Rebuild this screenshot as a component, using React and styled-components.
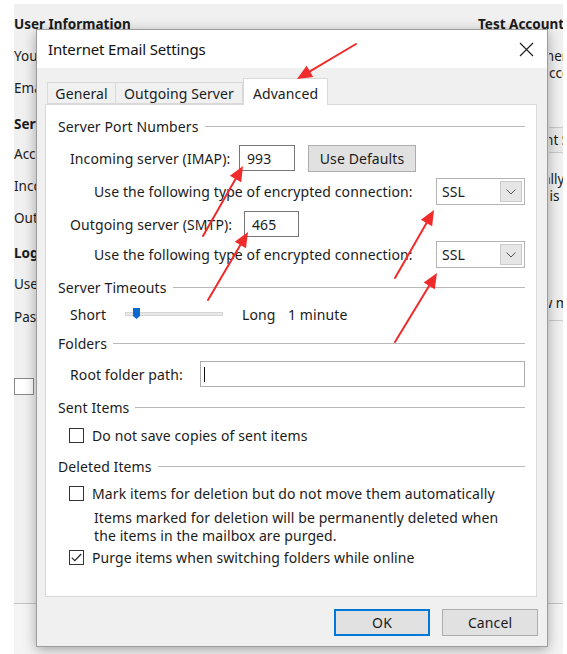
import React from "react";
import styled, { createGlobalStyle } from "styled-components";

const GlobalStyle = createGlobalStyle`
  html, body {
    margin: 0;
    padding: 0;
    background: #fff;
  }
  body {
    font-family: "Noto Sans", "Open Sans", sans-serif;
    color: #1b1b1b;
  }
`;

const Page = styled.div`
  position: relative;
  width: 567px;
  height: 654px;
  overflow: hidden;
  background: #fff;
  padding: 4px 4px 0 14px;
  box-sizing: border-box;
`;

/* account window behind the dialog */
const BackWindow = styled.div`
  height: 100%;
  background: #f0f0f0;
  display: flex;
  flex-direction: column;
  overflow: hidden;
`;

const BackHeader = styled.div`
  display: flex;
  padding-top: 10px;
  height: 20px;
  flex-shrink: 0;
`;

const BackBody = styled.div`
  flex: 1;
  display: flex;
  justify-content: space-between;
`;

const Strip = styled.div`
  width: ${(p) => p.$w}px;
  flex-shrink: 0;
  overflow: hidden;
  display: flex;
  flex-direction: column;
`;

const StripInner = styled.div`
  display: flex;
  flex-direction: column;
  margin-left: ${(p) => p.$shift || 0}px;
  width: 200px;
`;

const BackLabel = styled.div`
  height: 20px;
  line-height: 20px;
  font-size: 13.5px;
  white-space: nowrap;
  font-weight: ${(p) => (p.$bold ? 700 : 400)};
  margin-top: ${(p) => p.$mt || 0}px;
  color: ${(p) => p.$color || "#1b1b1b"};
  width: ${(p) => (p.$w ? `${p.$w}px` : "auto")};
  flex-shrink: 0;
`;

const BackButton = styled.div`
  height: 24px;
  line-height: 24px;
  margin-top: ${(p) => p.$mt || 0}px;
  font-size: 13.5px;
  white-space: nowrap;
  border-top: 1px solid #c9c9c9;
  border-bottom: 1px solid #c9c9c9;
  background: #e9e9e9;
`;

const BackBox = styled.div`
  width: 20px;
  height: 17px;
  margin-top: ${(p) => p.$mt || 0}px;
  background: #fff;
  border: 1px solid #8a8a8a;
  box-sizing: border-box;
`;

const BackRule = styled.div`
  height: 1px;
  background: #c9c9c9;
  margin-top: ${(p) => p.$mt || 0}px;
`;

const BackFooter = styled.div`
  height: 50px;
  flex-shrink: 0;
  border-top: 1px solid #c4c4c4;
  background: #f4f4f4;
`;

/* the modal dialog */
const Dialog = styled.div`
  position: absolute;
  left: 36px;
  top: 29px;
  width: 512px;
  height: 618px;
  box-sizing: border-box;
  border: 1px solid #9c9c9c;
  background: #f0f0f0;
  box-shadow: 0 3px 12px rgba(0, 0, 0, 0.32);
  display: flex;
  flex-direction: column;
  z-index: 2;
`;

const TitleBar = styled.div`
  height: 38px;
  flex-shrink: 0;
  background: #fff;
  display: flex;
  align-items: center;
  justify-content: space-between;
  padding: 0 12px 0 11px;
`;

const Title = styled.div`
  font-size: 15px;
  color: #111;
  letter-spacing: -0.15px;
`;

const CloseButton = styled.div`
  width: 18px;
  height: 18px;
  display: flex;
  align-items: center;
  justify-content: center;
`;

const DialogBody = styled.div`
  flex: 1;
  display: flex;
  flex-direction: column;
  padding: 10px 10px 0 8px;
  font-size: 14px;
  letter-spacing: 0.1px;
`;

const TabStrip = styled.div`
  display: flex;
  align-items: flex-end;
  height: 26px;
  padding-left: 2px;
  position: relative;
  z-index: 1;
`;

const Tab = styled.div`
  width: ${(p) => p.$w}px;
  height: ${(p) => (p.$active ? 27 : 22)}px;
  margin-bottom: ${(p) => (p.$active ? -1 : 0)}px;
  box-sizing: border-box;
  display: flex;
  align-items: center;
  justify-content: center;
  background: ${(p) => (p.$active ? "#fff" : "#f0f0f0")};
  border: 1px solid #d9d9d9;
  border-bottom: ${(p) => (p.$active ? "none" : "1px solid #d9d9d9")};
  border-left: ${(p) => (p.$first || p.$active ? "1px solid #d9d9d9" : "none")};
  padding-top: ${(p) => (p.$active ? 2 : 0)}px;
`;

const Panel = styled.div`
  height: 493px;
  box-sizing: border-box;
  background: #fff;
  border: 1px solid #d9d9d9;
  padding: 11px 11px 0 12px;
  display: flex;
  flex-direction: column;
`;

const GroupHeader = styled.div`
  height: 20px;
  margin-top: ${(p) => p.$mt || 0}px;
  display: flex;
  align-items: center;
  gap: 6px;

  &::after {
    content: "";
    flex: 1;
    height: 1px;
    background: #b9b9b9;
    margin-top: 1px;
  }
`;

const Row = styled.div`
  display: flex;
  align-items: center;
  height: ${(p) => p.$h || 20}px;
  margin-top: ${(p) => p.$mt || 0}px;
  padding-left: ${(p) => p.$indent || 12}px;
  white-space: nowrap;
`;

const FieldLabel = styled.div`
  width: ${(p) => p.$w}px;
  flex-shrink: 0;
  white-space: nowrap;
`;

const TextBox = styled.div`
  width: ${(p) => p.$w}px;
  height: 26px;
  box-sizing: border-box;
  border: 1px solid ${(p) => (p.$soft ? "#adadad" : "#767676")};
  display: flex;
  align-items: center;
  padding-left: ${(p) => (p.$soft ? 3 : 7)}px;
  background: #fff;
`;

const Caret = styled.div`
  width: 1px;
  height: 15px;
  background: #111;
`;

const GrayButton = styled.div`
  width: ${(p) => p.$w}px;
  height: 27px;
  margin-left: ${(p) => p.$ml || 0}px;
  box-sizing: border-box;
  background: #e1e1e1;
  border: ${(p) => (p.$default ? "2px solid #0078d7" : "1px solid #adadad")};
  display: flex;
  align-items: center;
  justify-content: center;
  flex-shrink: 0;
`;

const Select = styled.div`
  width: 91px;
  height: 27px;
  box-sizing: border-box;
  border: 1px solid #b4b4b4;
  background: #fff;
  display: flex;
  align-items: center;
  justify-content: space-between;
  padding: 0 2px 0 5px;
`;

const DropArrow = styled.div`
  width: 22px;
  height: 21px;
  box-sizing: border-box;
  background: #e6e6e6;
  border: 1px solid #cacaca;
  display: flex;
  align-items: center;
  justify-content: center;
`;

const SliderTrack = styled.div`
  position: relative;
  width: 98px;
  height: 4px;
  background: #e7e7e7;
  border: 1px solid #d6d6d6;
  box-sizing: border-box;
  flex-shrink: 0;
`;

const Thumb = styled.div`
  position: absolute;
  left: 7px;
  top: -5px;
  line-height: 0;
`;

const TextBlock = styled.span`
  width: ${(p) => p.$w}px;
  margin-left: ${(p) => p.$ml || 0}px;
  flex-shrink: 0;
  white-space: nowrap;
`;

const CheckBox = styled.div`
  width: 15px;
  height: 15px;
  box-sizing: border-box;
  border: 1px solid #333;
  background: #fff;
  margin-left: -1px;
  margin-right: 8px;
  display: flex;
  align-items: center;
  justify-content: center;
  flex-shrink: 0;
`;

const Note = styled.div`
  margin-top: ${(p) => p.$mt || 0}px;
  padding-left: 36px;
  line-height: 18px;
`;

const ButtonBar = styled.div`
  display: flex;
  justify-content: flex-end;
  gap: 12px;
  margin-top: 12px;
  margin-right: -1px;
`;

const Annotations = styled.svg`
  position: absolute;
  left: 0;
  top: 0;
  z-index: 5;
  pointer-events: none;
`;

const arrows = [
  [356, 44, 297, 79],
  [203, 236, 243, 166],
  [208, 300, 248, 232],
  [395, 278, 434, 210],
  [395, 342, 437, 273],
];

function Arrow({ x1, y1, x2, y2 }) {
  const dx = x2 - x1;
  const dy = y2 - y1;
  const len = Math.hypot(dx, dy);
  const ux = dx / len;
  const uy = dy / len;
  const head = 15;
  const half = 6.5;
  const bx = x2 - ux * head;
  const by = y2 - uy * head;
  const pts = [
    `${x2},${y2}`,
    `${bx - uy * half},${by + ux * half}`,
    `${bx + uy * half},${by - ux * half}`,
  ].join(" ");
  return (
    <g>
      <line x1={x1} y1={y1} x2={bx + ux * 2} y2={by + uy * 2} stroke="#ef2b2b" strokeWidth="2" strokeLinecap="round" />
      <polygon points={pts} fill="#ef2b2b" />
    </g>
  );
}

function Chevron() {
  return (
    <svg width="10" height="6" viewBox="0 0 10 6">
      <path d="M0.5 0.5 L5 5 L9.5 0.5" fill="none" stroke="#555" strokeWidth="1" />
    </svg>
  );
}

function EncryptionRow({ mt }) {
  return (
    <Row $h={27} $mt={mt} $indent={36}>
      <FieldLabel $w={342}>Use the following type of encrypted connection:</FieldLabel>
      <Select>
        <span>SSL</span>
        <DropArrow>
          <Chevron />
        </DropArrow>
      </Select>
    </Row>
  );
}

export default function App() {
  return (
    <>
      <GlobalStyle />
      <Page>
        <BackWindow>
          <BackHeader>
            <BackLabel $bold $w={464}>User Information</BackLabel>
            <BackLabel $bold>Test Account Settings</BackLabel>
          </BackHeader>
          <BackBody>
            <Strip $w={22}>
              <BackLabel $mt={12}>Your Name:</BackLabel>
              <BackLabel $mt={12}>Email Address:</BackLabel>
              <BackLabel $mt={16} $bold>Server Information</BackLabel>
              <BackLabel $mt={10}>Account Type:</BackLabel>
              <BackLabel $mt={12}>Incoming mail server:</BackLabel>
              <BackLabel $mt={12}>Outgoing mail server (SMTP):</BackLabel>
              <BackLabel $mt={15} $bold>Logon Information</BackLabel>
              <BackLabel $mt={11}>User Name:</BackLabel>
              <BackLabel $mt={13}>Password:</BackLabel>
              <BackBox $mt={51} />
            </Strip>
            <Strip $w={14}>
              <StripInner $shift={-71}>
                <BackLabel $mt={12}>We recommend that you</BackLabel>
                <BackLabel $mt={-3}>test your: account</BackLabel>
                <BackButton $mt={44}>Test Account Settings ...</BackButton>
                <BackLabel $mt={16}>Automatically test acc</BackLabel>
                <BackLabel $mt={-3}>when Next is clicked</BackLabel>
                <BackLabel $mt={87}>Deliver new messages</BackLabel>
                <BackRule $mt={7} />
              </StripInner>
            </Strip>
          </BackBody>
          <BackFooter />
        </BackWindow>

        <Dialog>
          <TitleBar>
            <Title>Internet Email Settings</Title>
            <CloseButton>
              <svg width="15" height="15" viewBox="0 0 15 15">
                <path d="M1 1 L14 14 M14 1 L1 14" stroke="#222" strokeWidth="1.2" />
              </svg>
            </CloseButton>
          </TitleBar>

          <DialogBody>
            <TabStrip>
              <Tab $first $w={69}>General</Tab>
              <Tab $w={127}>Outgoing Server</Tab>
              <Tab $active $w={85}>Advanced</Tab>
            </TabStrip>

            <Panel>
              <GroupHeader>Server Port Numbers</GroupHeader>
              <Row $h={26} $mt={9}>
                <FieldLabel $w={169}>Incoming server (IMAP):</FieldLabel>
                <TextBox $w={56}>993</TextBox>
                <GrayButton $w={108} $ml={13}>Use Defaults</GrayButton>
              </Row>
              <EncryptionRow mt={7} />
              <Row $h={26} $mt={6}>
                <FieldLabel $w={174}>Outgoing server (SMTP):</FieldLabel>
                <TextBox $w={55}>465</TextBox>
              </Row>
              <EncryptionRow mt={4} />

              <GroupHeader $mt={9}>Server Timeouts</GroupHeader>
              <Row $mt={7}>
                <TextBlock $w={55}>Short</TextBlock>
                <SliderTrack>
                  <Thumb>
                    <svg width="7" height="11" viewBox="0 0 7 11">
                      <path d="M0 0 H7 V8 L3.5 11 L0 8 Z" fill="#0a6ad0" />
                    </svg>
                  </Thumb>
                </SliderTrack>
                <TextBlock $w={46} $ml={19}>Long</TextBlock>
                <span>1 minute</span>
              </Row>

              <GroupHeader $mt={9}>Folders</GroupHeader>
              <Row $h={26} $mt={8}>
                <FieldLabel $w={130}>Root folder path:</FieldLabel>
                <TextBox $w={327} $soft>
                  <Caret />
                </TextBox>
              </Row>

              <GroupHeader $mt={10}>Sent Items</GroupHeader>
              <Row $mt={8}>
                <CheckBox />
                Do not save copies of sent items
              </Row>

              <GroupHeader $mt={11}>Deleted Items</GroupHeader>
              <Row $mt={7}>
                <CheckBox />
                Mark items for deletion but do not move them automatically
              </Row>
              <Note $mt={6}>
                Items marked for deletion will be permanently deleted when
                <br />
                the items in the mailbox are purged.
              </Note>
              <Row $mt={2}>
                <CheckBox>
                  <svg width="11" height="9" viewBox="0 0 11 9">
                    <path d="M0.8 4.6 L3.8 7.6 L10.2 1" fill="none" stroke="#222" strokeWidth="1.2" />
                  </svg>
                </CheckBox>
                Purge items when switching folders while online
              </Row>
            </Panel>

            <ButtonBar>
              <GrayButton $w={96} $default>OK</GrayButton>
              <GrayButton $w={96}>Cancel</GrayButton>
            </ButtonBar>
          </DialogBody>
        </Dialog>

        <Annotations width="567" height="654" viewBox="0 0 567 654">
          {arrows.map(([x1, y1, x2, y2], i) => (
            <Arrow key={i} x1={x1} y1={y1} x2={x2} y2={y2} />
          ))}
        </Annotations>
      </Page>
    </>
  );
}
